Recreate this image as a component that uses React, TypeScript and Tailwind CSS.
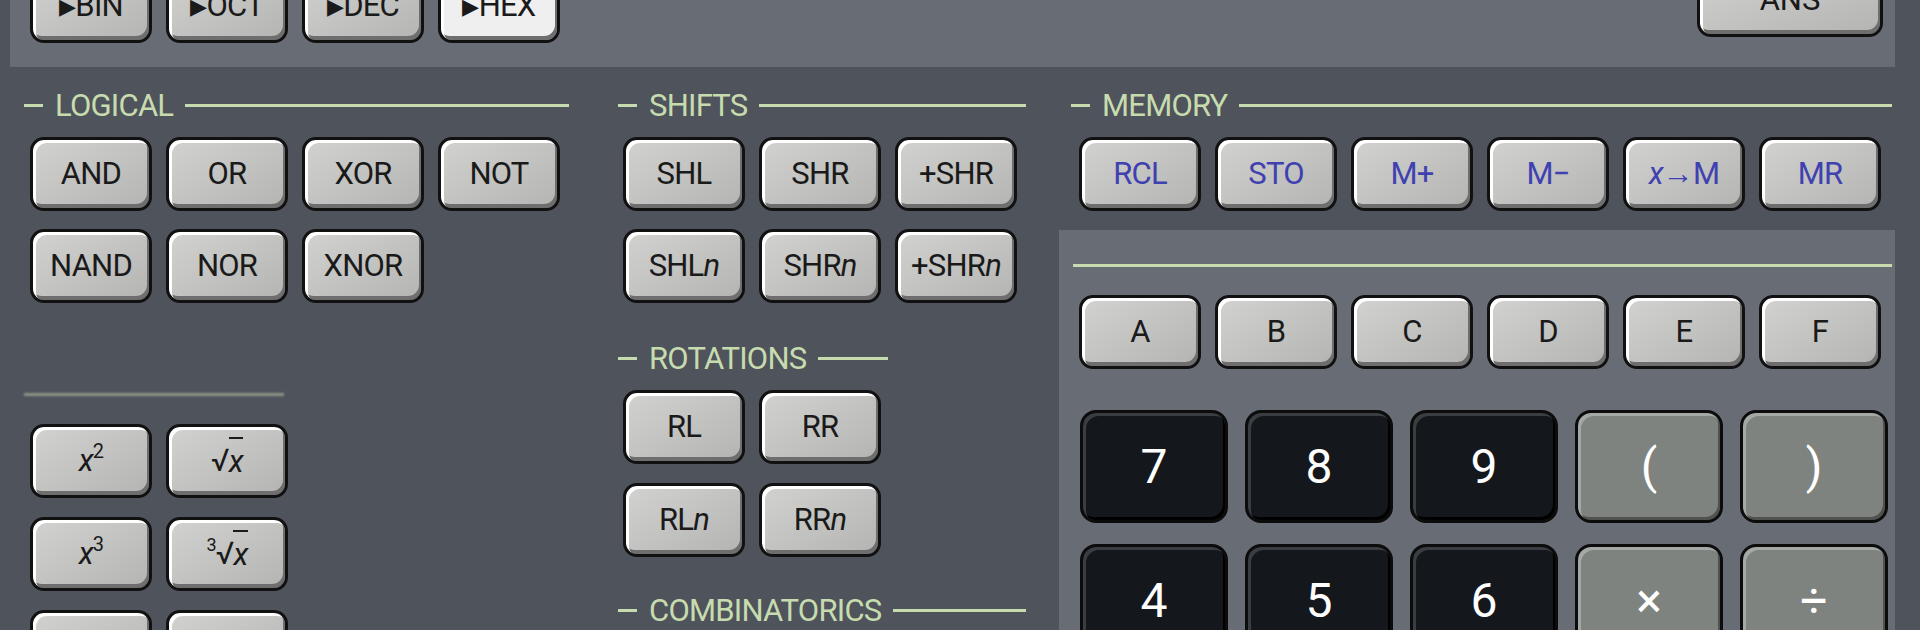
import React from "react";

const font = { fontFamily: "Roboto, 'Liberation Sans', sans-serif" };

function Key({ children, light, blue }: { children: React.ReactNode; light?: boolean; blue?: boolean }) {
  return (
    <div
      className={`w-[122px] h-[74px] shrink-0 rounded-[14px] border-[3px] border-[#111] flex items-center justify-center text-[31px] tracking-tight shadow-[inset_3px_3px_0_#fff,inset_-2px_-4px_0_#6e6e6e] ${
        light ? "bg-[#efefef]" : "bg-gradient-to-br from-[#d2d2d0] to-[#b4b4b2]"
      } ${blue ? "text-[#3f41b0]" : "text-[#1a1a1a]"}`}
    >
      {children}
    </div>
  );
}

function BigKey({ children, dark }: { children: React.ReactNode; dark?: boolean }) {
  return (
    <div
      className={`w-[148px] h-[113px] shrink-0 rounded-[16px] border-[3px] border-[#0c0c0c] flex items-center justify-center text-[48px] text-white ${
        dark
          ? "bg-[#14171b] shadow-[inset_3px_3px_0_#3a3d42,inset_-2px_-3px_0_#000]"
          : "bg-[#7e8380] shadow-[inset_3px_3px_0_#a5a9a6,inset_-2px_-3px_0_#50524f]"
      }`}
    >
      {children}
    </div>
  );
}

function Header({ title, line = true }: { title?: string; line?: boolean }) {
  return (
    <div className="flex items-center h-[36px] gap-[12px]">
      {title && <div className="w-[19px] h-[3px] bg-[#c7dcae]" />}
      {title && <span className="text-[31px] text-[#c7dcae] tracking-tight leading-none">{title}</span>}
      {line && <div className="flex-1 h-[3px] bg-[#c7dcae]" />}
    </div>
  );
}

const Row = ({ children }: { children: React.ReactNode }) => <div className="flex gap-[14px]">{children}</div>;
const n = (s: string) => (
  <span>
    {s}
    <i>n</i>
  </span>
);

export default function App() {
  return (
    <div className="w-[1920px] h-[630px] overflow-hidden bg-[#4f535c]" style={font}>
      {/* top display panel */}
      <div className="ml-[10px] w-[1885px] h-[67px] bg-[#686c75] overflow-hidden flex justify-between px-[20px]">
        <div className="flex gap-[14px] -mt-[31px]">
          <Key><span className="text-[22px]">▶</span>BIN</Key>
          <Key><span className="text-[22px]">▶</span>OCT</Key>
          <Key><span className="text-[22px]">▶</span>DEC</Key>
          <Key light><span className="text-[22px]">▶</span>HEX</Key>
        </div>
        <div className="-mt-[37px] w-[186px] h-[74px] rounded-[14px] border-[3px] border-[#111] bg-gradient-to-br from-[#d2d2d0] to-[#b4b4b2] shadow-[inset_3px_3px_0_#fff,inset_-2px_-4px_0_#6e6e6e] flex items-center justify-center text-[31px] text-[#1a1a1a] mr-[-8px]">
          ANS
        </div>
      </div>

      <div className="flex">
        {/* column 1 */}
        <div className="w-[545px] ml-[24px] pt-[20px]">
          <Header title="LOGICAL" />
          <div className="pl-[6px] mt-[14px] flex flex-col gap-[18px]">
            <Row>
              <Key>AND</Key><Key>OR</Key><Key>XOR</Key><Key>NOT</Key>
            </Row>
            <Row>
              <Key>NAND</Key><Key>NOR</Key><Key>XNOR</Key>
            </Row>
          </div>
          <div className="mt-[90px] w-[260px] h-[3px] bg-[#c7dcae] opacity-50 blur-[1px]" />
          <div className="pl-[6px] mt-[28px] flex flex-col gap-[19px]">
            <Row>
              <Key><i>x</i><sup className="text-[20px]">2</sup></Key>
              <Key>√<span className="border-t-2 border-[#1a1a1a] italic">x</span></Key>
            </Row>
            <Row>
              <Key><i>x</i><sup className="text-[20px]">3</sup></Key>
              <Key><sup className="text-[18px]">3</sup>√<span className="border-t-2 border-[#1a1a1a] italic">x</span></Key>
            </Row>
            <Row>
              <Key>&nbsp;</Key><Key>&nbsp;</Key>
            </Row>
          </div>
        </div>

        {/* column 2 */}
        <div className="w-[408px] ml-[49px] pt-[20px]">
          <Header title="SHIFTS" />
          <div className="pl-[5px] mt-[14px] flex flex-col gap-[18px]">
            <Row>
              <Key>SHL</Key><Key>SHR</Key><Key>+SHR</Key>
            </Row>
            <Row>
              <Key>{n("SHL")}</Key><Key>{n("SHR")}</Key><Key>{n("+SHR")}</Key>
            </Row>
          </div>
          <div className="mt-[37px] w-[270px]">
            <Header title="ROTATIONS" />
          </div>
          <div className="pl-[5px] mt-[14px] flex flex-col gap-[19px]">
            <Row>
              <Key>RL</Key><Key>RR</Key>
            </Row>
            <Row>
              <Key>{n("RL")}</Key><Key>{n("RR")}</Key>
            </Row>
          </div>
          <div className="mt-[35px]">
            <Header title="COMBINATORICS" />
          </div>
        </div>

        {/* column 3 */}
        <div className="ml-[33px] w-[836px]">
          <div className="pl-[12px] pr-[3px] pt-[20px]">
            <Header title="MEMORY" />
          </div>
          <div className="pl-[20px] mt-[14px]">
            <Row>
              <Key blue>RCL</Key><Key blue>STO</Key><Key blue>M+</Key><Key blue>M−</Key>
              <Key blue><span><i>x</i>→M</span></Key><Key blue>MR</Key>
            </Row>
          </div>
          <div className="mt-[19px] h-[400px] bg-[#686c75] pt-[34px] pl-[14px] pr-[3px]">
            <div className="h-[3px] bg-[#c7dcae]" />
            <div className="mt-[28px] pl-[6px]">
              <Row>
                <Key>A</Key><Key>B</Key><Key>C</Key><Key>D</Key><Key>E</Key><Key>F</Key>
              </Row>
            </div>
            <div className="mt-[41px] pl-[7px] flex flex-col gap-[21px]">
              <div className="flex gap-[17px]">
                <BigKey dark>7</BigKey><BigKey dark>8</BigKey><BigKey dark>9</BigKey><BigKey>(</BigKey><BigKey>)</BigKey>
              </div>
              <div className="flex gap-[17px]">
                <BigKey dark>4</BigKey><BigKey dark>5</BigKey><BigKey dark>6</BigKey><BigKey>×</BigKey><BigKey>÷</BigKey>
              </div>
            </div>
          </div>
        </div>
      </div>
    </div>
  );
}
